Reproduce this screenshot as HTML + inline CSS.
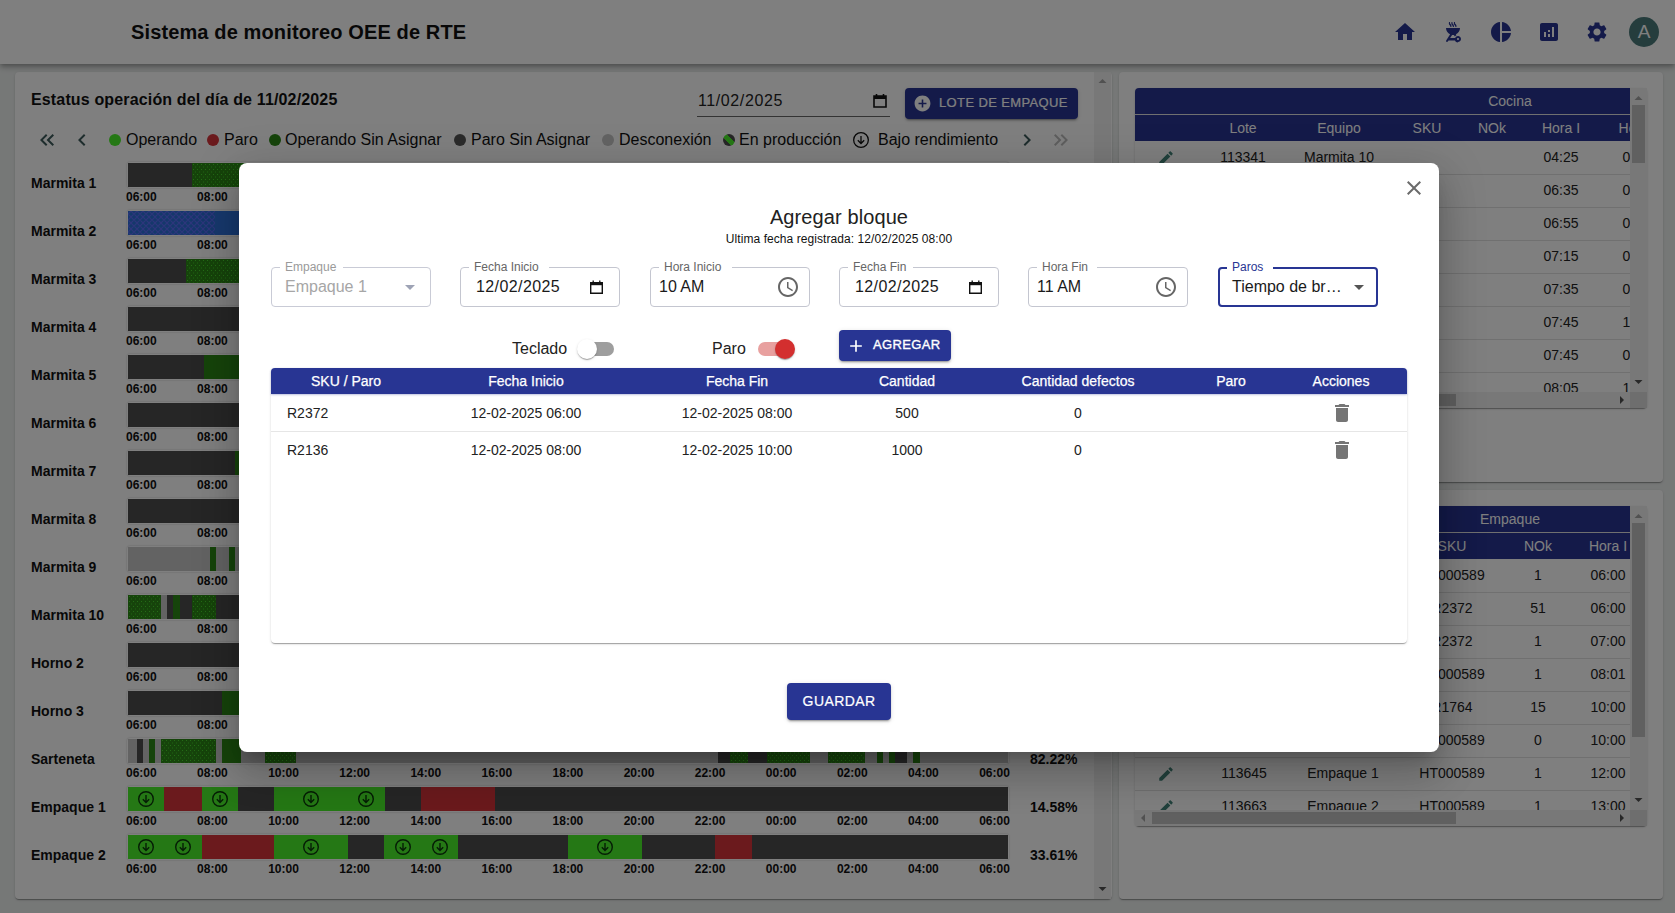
<!DOCTYPE html>
<html><head><meta charset="utf-8"><title>OEE</title>
<style>
html,body{margin:0;padding:0;width:1675px;height:913px;overflow:hidden;background:#edf0ef;font-family:"Liberation Sans", sans-serif}
.a{position:absolute}
.t{position:absolute;white-space:nowrap}
#page{position:absolute;left:0;top:0;width:1675px;height:913px}
svg{display:block}
</style></head><body>
<svg width="0" height="0" style="position:absolute"><defs><pattern id="pdots" width="4" height="5" patternUnits="userSpaceOnUse"><rect x="1" y="1" width="1" height="1" fill="#48d82c"/><rect x="3" y="3.5" width="1" height="1" fill="#48d82c" opacity=".8"/></pattern><pattern id="pblue" width="6" height="6" patternUnits="userSpaceOnUse"><path d="M0 3L3 0L6 3L3 6Z" fill="none" stroke="#5a6cf8" stroke-width="1.1"/></pattern></defs></svg>
<div id="page">
<div class="a" style="left:0px;top:0px;width:1675px;height:64px;background:#fff;box-shadow:0 2px 4px -1px rgba(0,0,0,.2),0 4px 5px 0 rgba(0,0,0,.14),0 1px 10px 0 rgba(0,0,0,.12);z-index:2"></div>
<div class="a" style="left:0;top:0;width:1675px;height:64px;z-index:3">
<div class="t" style="left:131px;top:22.07px;font-size:20px;line-height:20px;color:#111;font-weight:bold;letter-spacing:0.13px">Sistema de monitoreo OEE de RTE</div>
<svg class="a" style="left:1393px;top:20px;" width="24" height="24" viewBox="0 0 24 24"><path fill="#283593" d="M10 20v-6h4v6h5v-8h3L12 3 2 12h3v8z"/></svg>
<svg class="a" style="left:1441px;top:20px;" width="24" height="24" viewBox="0 0 24 24"><path fill="#283593" d="M17 22c1.66 0 3-1.34 3-3s-1.34-3-3-3c-1.3 0-2.4.84-2.82 2H9.14l1.99-3.06c.29.04.58.06.87.06s.58-.02.87-.06l1.02 1.57c.42-.53.96-.95 1.6-1.21l-.6-.93C17.31 13.27 19 10.84 19 8H5c0 2.84 1.69 5.27 4.12 6.37l-3.95 6.08c-.3.46-.17 1.08.29 1.38.17.11.36.17.54.17.33 0 .65-.16.84-.46l.68-1.04h6.46c.42 1.16 1.52 2 2.82 2zm0-4c.55 0 1 .45 1 1s-.45 1-1 1-1-.45-1-1 .45-1 1-1zM9.41 7h1c.15-1.15.23-1.64-.89-2.96-.42-.5-.68-.78-.53-2.04h-.99c-.44 1.85.07 2.57.66 3.2.32.35.59.68.75 1.8zm2.49 0h1c.15-1.15.23-1.64-.89-2.96-.42-.5-.68-.78-.53-2.04h-.99c-.44 1.85.07 2.57.66 3.2.32.35.59.68.75 1.8zm2.52 0h1c.15-1.15.23-1.64-.89-2.96-.42-.5-.68-.78-.53-2.04h-.99c-.44 1.85.07 2.57.66 3.2.32.35.59.68.75 1.8z"/></svg>
<svg class="a" style="left:1489px;top:20px;" width="24" height="24" viewBox="0 0 24 24"><path fill="#283593" d="M11 2v20c-5.07-.5-9-4.79-9-10s3.93-9.5 9-10zm2.03 0v8.99H22c-.47-4.74-4.24-8.52-8.97-8.99zm0 11.01V22c4.74-.47 8.5-4.25 8.97-8.99h-8.97z"/></svg>
<svg class="a" style="left:1537px;top:20px;" width="24" height="24" viewBox="0 0 24 24"><path fill="#283593" d="M19 3H5c-1.1 0-2 .9-2 2v14c0 1.1.9 2 2 2h14c1.1 0 2-.9 2-2V5c0-1.1-.9-2-2-2zM9 17H7v-5h2v5zm4 0h-2v-3h2v3zm0-5h-2v-2h2v2zm4 5h-2V7h2v10z"/></svg>
<svg class="a" style="left:1585px;top:20px;" width="24" height="24" viewBox="0 0 24 24"><path fill="#283593" d="M19.14 12.94c.04-.3.06-.61.06-.94 0-.32-.02-.64-.07-.94l2.03-1.58c.18-.14.23-.41.12-.61l-1.92-3.32c-.12-.22-.37-.29-.59-.22l-2.39.96c-.5-.38-1.03-.7-1.62-.94l-.36-2.54c-.04-.24-.24-.41-.48-.41h-3.84c-.24 0-.43.17-.47.41l-.36 2.54c-.59.24-1.13.57-1.62.94l-2.39-.96c-.22-.08-.47 0-.59.22L2.74 8.87c-.12.21-.08.47.12.61l2.03 1.58c-.05.3-.09.63-.09.94s.02.64.07.94l-2.03 1.58c-.18.14-.23.41-.12.61l1.92 3.32c.12.22.37.29.59.22l2.39-.96c.5.38 1.03.7 1.62.94l.36 2.54c.05.24.24.41.48.41h3.84c.24 0 .44-.17.47-.41l.36-2.54c.59-.24 1.13-.56 1.62-.94l2.39.96c.22.08.47 0 .59-.22l1.92-3.32c.12-.22.07-.47-.12-.61l-2.01-1.58zM12 15.6c-1.98 0-3.6-1.62-3.6-3.6s1.62-3.6 3.6-3.6 3.6 1.62 3.6 3.6-1.62 3.6-3.6 3.6z"/></svg>
<div class="a" style="left:1629px;top:17px;width:30px;height:30px;border-radius:50%;background:#4a7a7a"></div>
<div class="t" style="left:1624.00px;width:40px;text-align:center;top:21.92px;font-size:19px;line-height:19px;color:#fff;font-weight:normal;">A</div>
</div>
<div class="a" style="left:15px;top:72px;width:1097px;height:827px;background:#fff;border-radius:4px;box-shadow:0 2px 1px -1px rgba(0,0,0,.2),0 1px 1px 0 rgba(0,0,0,.14),0 1px 3px 0 rgba(0,0,0,.12)"></div>
<div class="a" style="left:1094px;top:72px;width:17px;height:827px;background:#f1f1f1"></div>
<svg class="a" style="left:1094px;top:75px" width="17" height="10"><path d="M4.5 8L8.5 4L12.5 8z" fill="#a3a3a3"/></svg>
<svg class="a" style="left:1094px;top:885px" width="17" height="10"><path d="M4.5 2L8.5 6L12.5 2z" fill="#505050"/></svg>
<div class="t" style="left:31px;top:92.46px;font-size:16px;line-height:16px;color:#111;font-weight:bold;letter-spacing:0.15px">Estatus operación del día de 11/02/2025</div>
<div class="t" style="left:698px;top:93.46px;font-size:16px;line-height:16px;color:#222;font-weight:normal;letter-spacing:0.6px">11/02/2025</div>
<div class="a" style="left:697px;top:116px;width:193px;height:1px;background:#666"></div>
<svg class="a" style="left:873px;top:93px" width="14" height="15" viewBox="0 0 14 15"><path d="M1 3h12v11H1z" fill="none" stroke="#111" stroke-width="1.6"/><path d="M1 3h12v3H1z" fill="#111"/><path d="M3.5 1v3M10.5 1v3" stroke="#111" stroke-width="1.6"/></svg>
<div class="a" style="left:905px;top:88px;width:173px;height:31px;background:#283593;border-radius:4px;box-shadow:0 3px 1px -2px rgba(0,0,0,.2),0 2px 2px 0 rgba(0,0,0,.14),0 1px 5px 0 rgba(0,0,0,.12)"></div>
<svg class="a" style="left:913px;top:94px;" width="19" height="19" viewBox="0 0 24 24"><path fill="#fff" d="M12 2C6.48 2 2 6.48 2 12s4.48 10 10 10 10-4.48 10-10S17.52 2 12 2zm5 11h-4v4h-2v-4H7v-2h4V7h2v4h4v2z"/></svg>
<div class="t" style="left:939px;top:96.00px;font-size:13px;line-height:13px;color:#fff;font-weight:normal;letter-spacing:0.37px;-webkit-text-stroke:0.2px #fff">LOTE DE EMPAQUE</div>
<svg class="a" style="left:35px;top:128px;" width="24" height="24" viewBox="0 0 24 24"><path fill="#3c5a5a" d="M17.59 18L19 16.59 14.42 12 19 7.41 17.59 6l-6 6zM11 18l1.41-1.41L7.83 12l4.58-4.59L11 6l-6 6z"/></svg>
<svg class="a" style="left:70px;top:128px;" width="24" height="24" viewBox="0 0 24 24"><path fill="#3c5a5a" d="M15.41 7.41L14 6l-6 6 6 6 1.41-1.41L10.83 12z"/></svg>
<div class="a" style="left:109px;top:134px;width:12px;height:12px;border-radius:50%;background:#4af02a"></div>
<div class="t" style="left:126px;top:132.46px;font-size:16px;line-height:16px;color:#111;font-weight:normal;">Operando</div>
<div class="a" style="left:207px;top:134px;width:12px;height:12px;border-radius:50%;background:#d6343a"></div>
<div class="t" style="left:224px;top:132.46px;font-size:16px;line-height:16px;color:#111;font-weight:normal;">Paro</div>
<div class="a" style="left:269px;top:134px;width:12px;height:12px;border-radius:50%;background:#2c8816"></div>
<div class="t" style="left:285px;top:132.46px;font-size:16px;line-height:16px;color:#111;font-weight:normal;">Operando Sin Asignar</div>
<div class="a" style="left:454px;top:134px;width:12px;height:12px;border-radius:50%;background:#555"></div>
<div class="t" style="left:471px;top:132.46px;font-size:16px;line-height:16px;color:#111;font-weight:normal;">Paro Sin Asignar</div>
<div class="a" style="left:602px;top:134px;width:12px;height:12px;border-radius:50%;background:#c6c6c6"></div>
<div class="t" style="left:619px;top:132.46px;font-size:16px;line-height:16px;color:#111;font-weight:normal;">Desconexión</div>
<div class="a" style="left:723px;top:134px;width:12px;height:12px;border-radius:50%;background:linear-gradient(45deg,#4c4c4c 0 35%,#4af02a 35% 65%,#4c4c4c 65%)"></div>
<div class="t" style="left:739px;top:132.46px;font-size:16px;line-height:16px;color:#111;font-weight:normal;">En producción</div>
<svg class="a" style="left:853.0px;top:132.0px" width="16" height="16" viewBox="0 0 16 16"><circle cx="8.0" cy="8.0" r="7.35" fill="none" stroke="#111" stroke-width="1.3"/><path d="M8.0 4.0V11.52M4.8 8.32L8.0 11.52L11.2 8.32" fill="none" stroke="#111" stroke-width="1.3"/></svg>
<div class="t" style="left:878px;top:132.46px;font-size:16px;line-height:16px;color:#111;font-weight:normal;">Bajo rendimiento</div>
<svg class="a" style="left:1015px;top:128px;" width="24" height="24" viewBox="0 0 24 24"><path fill="#3c5a5a" d="M10 6L8.59 7.41 13.17 12l-4.58 4.59L10 18l6-6z"/></svg>
<svg class="a" style="left:1049px;top:128px;" width="24" height="24" viewBox="0 0 24 24"><path fill="#bdbdbd" d="M6.41 6L5 7.41 9.58 12 5 16.59 6.41 18l6-6zM13 6l-1.41 1.41L16.17 12l-4.58 4.59L13 18l6-6z"/></svg>
<div class="t" style="left:31px;top:175.75px;font-size:14px;line-height:14px;color:#111;font-weight:bold;">Marmita 1</div>
<div class="a" style="left:127px;top:162px;width:882px;height:26px;border-radius:3px;box-shadow:0 0 2px rgba(0,0,0,.25)"></div>
<div class="a" style="left:128px;top:163px;width:64px;height:24px;background:#4c4c4c"></div>
<svg class="a" style="left:192px;top:163px" width="816" height="24"><rect width="816" height="24" fill="#2c8816"/><rect width="816" height="24" fill="url(#pdots)"/></svg>
<div class="a" style="left:126px;top:190px;width:884px;display:flex;justify-content:space-between;font-size:12px;line-height:14px;font-weight:bold;color:#111"><span>06:00</span><span>08:00</span><span>10:00</span><span>12:00</span><span>14:00</span><span>16:00</span><span>18:00</span><span>20:00</span><span>22:00</span><span>00:00</span><span>02:00</span><span>04:00</span><span>06:00</span></div>
<div class="t" style="left:31px;top:223.75px;font-size:14px;line-height:14px;color:#111;font-weight:bold;">Marmita 2</div>
<div class="a" style="left:127px;top:210px;width:882px;height:26px;border-radius:3px;box-shadow:0 0 2px rgba(0,0,0,.25)"></div>
<svg class="a" style="left:128px;top:211px" width="87" height="24"><rect width="87" height="24" fill="#2a70d6"/><rect width="87" height="24" fill="url(#pblue)"/></svg>
<div class="a" style="left:215px;top:211px;width:793px;height:24px;background:#2e72dc"></div>
<div class="a" style="left:126px;top:238px;width:884px;display:flex;justify-content:space-between;font-size:12px;line-height:14px;font-weight:bold;color:#111"><span>06:00</span><span>08:00</span><span>10:00</span><span>12:00</span><span>14:00</span><span>16:00</span><span>18:00</span><span>20:00</span><span>22:00</span><span>00:00</span><span>02:00</span><span>04:00</span><span>06:00</span></div>
<div class="t" style="left:31px;top:271.75px;font-size:14px;line-height:14px;color:#111;font-weight:bold;">Marmita 3</div>
<div class="a" style="left:127px;top:258px;width:882px;height:26px;border-radius:3px;box-shadow:0 0 2px rgba(0,0,0,.25)"></div>
<div class="a" style="left:128px;top:259px;width:58px;height:24px;background:#4c4c4c"></div>
<svg class="a" style="left:186px;top:259px" width="822" height="24"><rect width="822" height="24" fill="#2c8816"/><rect width="822" height="24" fill="url(#pdots)"/></svg>
<div class="a" style="left:126px;top:286px;width:884px;display:flex;justify-content:space-between;font-size:12px;line-height:14px;font-weight:bold;color:#111"><span>06:00</span><span>08:00</span><span>10:00</span><span>12:00</span><span>14:00</span><span>16:00</span><span>18:00</span><span>20:00</span><span>22:00</span><span>00:00</span><span>02:00</span><span>04:00</span><span>06:00</span></div>
<div class="t" style="left:31px;top:319.75px;font-size:14px;line-height:14px;color:#111;font-weight:bold;">Marmita 4</div>
<div class="a" style="left:127px;top:306px;width:882px;height:26px;border-radius:3px;box-shadow:0 0 2px rgba(0,0,0,.25)"></div>
<div class="a" style="left:128px;top:307px;width:880px;height:24px;background:#4c4c4c"></div>
<div class="a" style="left:126px;top:334px;width:884px;display:flex;justify-content:space-between;font-size:12px;line-height:14px;font-weight:bold;color:#111"><span>06:00</span><span>08:00</span><span>10:00</span><span>12:00</span><span>14:00</span><span>16:00</span><span>18:00</span><span>20:00</span><span>22:00</span><span>00:00</span><span>02:00</span><span>04:00</span><span>06:00</span></div>
<div class="t" style="left:31px;top:367.75px;font-size:14px;line-height:14px;color:#111;font-weight:bold;">Marmita 5</div>
<div class="a" style="left:127px;top:354px;width:882px;height:26px;border-radius:3px;box-shadow:0 0 2px rgba(0,0,0,.25)"></div>
<div class="a" style="left:128px;top:355px;width:76px;height:24px;background:#4c4c4c"></div>
<div class="a" style="left:204px;top:355px;width:804px;height:24px;background:#2c8816"></div>
<div class="a" style="left:126px;top:382px;width:884px;display:flex;justify-content:space-between;font-size:12px;line-height:14px;font-weight:bold;color:#111"><span>06:00</span><span>08:00</span><span>10:00</span><span>12:00</span><span>14:00</span><span>16:00</span><span>18:00</span><span>20:00</span><span>22:00</span><span>00:00</span><span>02:00</span><span>04:00</span><span>06:00</span></div>
<div class="t" style="left:31px;top:415.75px;font-size:14px;line-height:14px;color:#111;font-weight:bold;">Marmita 6</div>
<div class="a" style="left:127px;top:402px;width:882px;height:26px;border-radius:3px;box-shadow:0 0 2px rgba(0,0,0,.25)"></div>
<div class="a" style="left:128px;top:403px;width:880px;height:24px;background:#4c4c4c"></div>
<div class="a" style="left:126px;top:430px;width:884px;display:flex;justify-content:space-between;font-size:12px;line-height:14px;font-weight:bold;color:#111"><span>06:00</span><span>08:00</span><span>10:00</span><span>12:00</span><span>14:00</span><span>16:00</span><span>18:00</span><span>20:00</span><span>22:00</span><span>00:00</span><span>02:00</span><span>04:00</span><span>06:00</span></div>
<div class="t" style="left:31px;top:463.75px;font-size:14px;line-height:14px;color:#111;font-weight:bold;">Marmita 7</div>
<div class="a" style="left:127px;top:450px;width:882px;height:26px;border-radius:3px;box-shadow:0 0 2px rgba(0,0,0,.25)"></div>
<div class="a" style="left:128px;top:451px;width:107px;height:24px;background:#4c4c4c"></div>
<div class="a" style="left:235px;top:451px;width:773px;height:24px;background:#2c8816"></div>
<div class="a" style="left:126px;top:478px;width:884px;display:flex;justify-content:space-between;font-size:12px;line-height:14px;font-weight:bold;color:#111"><span>06:00</span><span>08:00</span><span>10:00</span><span>12:00</span><span>14:00</span><span>16:00</span><span>18:00</span><span>20:00</span><span>22:00</span><span>00:00</span><span>02:00</span><span>04:00</span><span>06:00</span></div>
<div class="t" style="left:31px;top:511.75px;font-size:14px;line-height:14px;color:#111;font-weight:bold;">Marmita 8</div>
<div class="a" style="left:127px;top:498px;width:882px;height:26px;border-radius:3px;box-shadow:0 0 2px rgba(0,0,0,.25)"></div>
<div class="a" style="left:128px;top:499px;width:880px;height:24px;background:#4c4c4c"></div>
<div class="a" style="left:126px;top:526px;width:884px;display:flex;justify-content:space-between;font-size:12px;line-height:14px;font-weight:bold;color:#111"><span>06:00</span><span>08:00</span><span>10:00</span><span>12:00</span><span>14:00</span><span>16:00</span><span>18:00</span><span>20:00</span><span>22:00</span><span>00:00</span><span>02:00</span><span>04:00</span><span>06:00</span></div>
<div class="t" style="left:31px;top:559.75px;font-size:14px;line-height:14px;color:#111;font-weight:bold;">Marmita 9</div>
<div class="a" style="left:127px;top:546px;width:882px;height:26px;border-radius:3px;box-shadow:0 0 2px rgba(0,0,0,.25)"></div>
<div class="a" style="left:128px;top:547px;width:82px;height:24px;background:#c6c6c6"></div>
<div class="a" style="left:210px;top:547px;width:6px;height:24px;background:#2c8816"></div>
<div class="a" style="left:216px;top:547px;width:13px;height:24px;background:#c6c6c6"></div>
<div class="a" style="left:229px;top:547px;width:6px;height:24px;background:#2c8816"></div>
<div class="a" style="left:235px;top:547px;width:773px;height:24px;background:#c6c6c6"></div>
<div class="a" style="left:126px;top:574px;width:884px;display:flex;justify-content:space-between;font-size:12px;line-height:14px;font-weight:bold;color:#111"><span>06:00</span><span>08:00</span><span>10:00</span><span>12:00</span><span>14:00</span><span>16:00</span><span>18:00</span><span>20:00</span><span>22:00</span><span>00:00</span><span>02:00</span><span>04:00</span><span>06:00</span></div>
<div class="t" style="left:31px;top:607.75px;font-size:14px;line-height:14px;color:#111;font-weight:bold;">Marmita 10</div>
<div class="a" style="left:127px;top:594px;width:882px;height:26px;border-radius:3px;box-shadow:0 0 2px rgba(0,0,0,.25)"></div>
<svg class="a" style="left:128px;top:595px" width="33" height="24"><rect width="33" height="24" fill="#2c8816"/><rect width="33" height="24" fill="url(#pdots)"/></svg>
<div class="a" style="left:161px;top:595px;width:6px;height:24px;background:#c6c6c6"></div>
<div class="a" style="left:167px;top:595px;width:6px;height:24px;background:#4c4c4c"></div>
<div class="a" style="left:173px;top:595px;width:7px;height:24px;background:#2c8816"></div>
<div class="a" style="left:180px;top:595px;width:12px;height:24px;background:#4c4c4c"></div>
<svg class="a" style="left:192px;top:595px" width="24" height="24"><rect width="24" height="24" fill="#2c8816"/><rect width="24" height="24" fill="url(#pdots)"/></svg>
<div class="a" style="left:216px;top:595px;width:792px;height:24px;background:#4c4c4c"></div>
<div class="a" style="left:126px;top:622px;width:884px;display:flex;justify-content:space-between;font-size:12px;line-height:14px;font-weight:bold;color:#111"><span>06:00</span><span>08:00</span><span>10:00</span><span>12:00</span><span>14:00</span><span>16:00</span><span>18:00</span><span>20:00</span><span>22:00</span><span>00:00</span><span>02:00</span><span>04:00</span><span>06:00</span></div>
<div class="t" style="left:31px;top:655.75px;font-size:14px;line-height:14px;color:#111;font-weight:bold;">Horno 2</div>
<div class="a" style="left:127px;top:642px;width:882px;height:26px;border-radius:3px;box-shadow:0 0 2px rgba(0,0,0,.25)"></div>
<div class="a" style="left:128px;top:643px;width:880px;height:24px;background:#4c4c4c"></div>
<div class="a" style="left:126px;top:670px;width:884px;display:flex;justify-content:space-between;font-size:12px;line-height:14px;font-weight:bold;color:#111"><span>06:00</span><span>08:00</span><span>10:00</span><span>12:00</span><span>14:00</span><span>16:00</span><span>18:00</span><span>20:00</span><span>22:00</span><span>00:00</span><span>02:00</span><span>04:00</span><span>06:00</span></div>
<div class="t" style="left:31px;top:703.75px;font-size:14px;line-height:14px;color:#111;font-weight:bold;">Horno 3</div>
<div class="a" style="left:127px;top:690px;width:882px;height:26px;border-radius:3px;box-shadow:0 0 2px rgba(0,0,0,.25)"></div>
<div class="a" style="left:128px;top:691px;width:94px;height:24px;background:#4c4c4c"></div>
<div class="a" style="left:222px;top:691px;width:786px;height:24px;background:#2c8816"></div>
<div class="a" style="left:126px;top:718px;width:884px;display:flex;justify-content:space-between;font-size:12px;line-height:14px;font-weight:bold;color:#111"><span>06:00</span><span>08:00</span><span>10:00</span><span>12:00</span><span>14:00</span><span>16:00</span><span>18:00</span><span>20:00</span><span>22:00</span><span>00:00</span><span>02:00</span><span>04:00</span><span>06:00</span></div>
<div class="t" style="left:31px;top:751.75px;font-size:14px;line-height:14px;color:#111;font-weight:bold;">Sarteneta</div>
<div class="a" style="left:127px;top:738px;width:882px;height:26px;border-radius:3px;box-shadow:0 0 2px rgba(0,0,0,.25)"></div>
<div class="a" style="left:128px;top:739px;width:9px;height:24px;background:#c6c6c6"></div>
<div class="a" style="left:137px;top:739px;width:6px;height:24px;background:#4c4c4c"></div>
<div class="a" style="left:143px;top:739px;width:6px;height:24px;background:#c6c6c6"></div>
<div class="a" style="left:149px;top:739px;width:6px;height:24px;background:#2c8816"></div>
<div class="a" style="left:155px;top:739px;width:6px;height:24px;background:#c6c6c6"></div>
<svg class="a" style="left:161px;top:739px" width="55" height="24"><rect width="55" height="24" fill="#2c8816"/><rect width="55" height="24" fill="url(#pdots)"/></svg>
<div class="a" style="left:216px;top:739px;width:6px;height:24px;background:#c6c6c6"></div>
<div class="a" style="left:222px;top:739px;width:19px;height:24px;background:#2c8816"></div>
<div class="a" style="left:241px;top:739px;width:24px;height:24px;background:#c6c6c6"></div>
<svg class="a" style="left:265px;top:739px" width="31" height="24"><rect width="31" height="24" fill="#2c8816"/><rect width="31" height="24" fill="url(#pdots)"/></svg>
<div class="a" style="left:296px;top:739px;width:422px;height:24px;background:#c6c6c6"></div>
<div class="a" style="left:718px;top:739px;width:12px;height:24px;background:#4c4c4c"></div>
<svg class="a" style="left:730px;top:739px" width="18" height="24"><rect width="18" height="24" fill="#2c8816"/><rect width="18" height="24" fill="url(#pdots)"/></svg>
<div class="a" style="left:748px;top:739px;width:19px;height:24px;background:#4c4c4c"></div>
<svg class="a" style="left:767px;top:739px" width="43" height="24"><rect width="43" height="24" fill="#2c8816"/><rect width="43" height="24" fill="url(#pdots)"/></svg>
<div class="a" style="left:810px;top:739px;width:18px;height:24px;background:#c6c6c6"></div>
<svg class="a" style="left:828px;top:739px" width="37" height="24"><rect width="37" height="24" fill="#2c8816"/><rect width="37" height="24" fill="url(#pdots)"/></svg>
<div class="a" style="left:865px;top:739px;width:12px;height:24px;background:#c6c6c6"></div>
<div class="a" style="left:877px;top:739px;width:6px;height:24px;background:#2c8816"></div>
<div class="a" style="left:883px;top:739px;width:6px;height:24px;background:#c6c6c6"></div>
<div class="a" style="left:889px;top:739px;width:6px;height:24px;background:#2c8816"></div>
<div class="a" style="left:895px;top:739px;width:12px;height:24px;background:#4c4c4c"></div>
<div class="a" style="left:907px;top:739px;width:6px;height:24px;background:#c6c6c6"></div>
<div class="a" style="left:913px;top:739px;width:7px;height:24px;background:#2c8816"></div>
<div class="a" style="left:920px;top:739px;width:88px;height:24px;background:#c6c6c6"></div>
<div class="a" style="left:126px;top:766px;width:884px;display:flex;justify-content:space-between;font-size:12px;line-height:14px;font-weight:bold;color:#111"><span>06:00</span><span>08:00</span><span>10:00</span><span>12:00</span><span>14:00</span><span>16:00</span><span>18:00</span><span>20:00</span><span>22:00</span><span>00:00</span><span>02:00</span><span>04:00</span><span>06:00</span></div>
<div class="t" style="left:31px;top:799.75px;font-size:14px;line-height:14px;color:#111;font-weight:bold;">Empaque 1</div>
<div class="a" style="left:127px;top:786px;width:882px;height:26px;border-radius:3px;box-shadow:0 0 2px rgba(0,0,0,.25)"></div>
<div class="a" style="left:128px;top:787px;width:36px;height:24px;background:#4af02a"></div>
<div class="a" style="left:164px;top:787px;width:38px;height:24px;background:#d6343a"></div>
<div class="a" style="left:202px;top:787px;width:36px;height:24px;background:#4af02a"></div>
<div class="a" style="left:238px;top:787px;width:36px;height:24px;background:#4c4c4c"></div>
<div class="a" style="left:274px;top:787px;width:111px;height:24px;background:#4af02a"></div>
<div class="a" style="left:385px;top:787px;width:36px;height:24px;background:#4c4c4c"></div>
<div class="a" style="left:421px;top:787px;width:74px;height:24px;background:#d6343a"></div>
<div class="a" style="left:495px;top:787px;width:513px;height:24px;background:#4c4c4c"></div>
<svg class="a" style="left:138.0px;top:791.0px" width="16" height="16" viewBox="0 0 16 16"><circle cx="8.0" cy="8.0" r="7.3" fill="none" stroke="#0b3a0b" stroke-width="1.4"/><path d="M8.0 4.0V11.52M4.8 8.32L8.0 11.52L11.2 8.32" fill="none" stroke="#0b3a0b" stroke-width="1.4"/></svg>
<svg class="a" style="left:212.0px;top:791.0px" width="16" height="16" viewBox="0 0 16 16"><circle cx="8.0" cy="8.0" r="7.3" fill="none" stroke="#0b3a0b" stroke-width="1.4"/><path d="M8.0 4.0V11.52M4.8 8.32L8.0 11.52L11.2 8.32" fill="none" stroke="#0b3a0b" stroke-width="1.4"/></svg>
<svg class="a" style="left:303.0px;top:791.0px" width="16" height="16" viewBox="0 0 16 16"><circle cx="8.0" cy="8.0" r="7.3" fill="none" stroke="#0b3a0b" stroke-width="1.4"/><path d="M8.0 4.0V11.52M4.8 8.32L8.0 11.52L11.2 8.32" fill="none" stroke="#0b3a0b" stroke-width="1.4"/></svg>
<svg class="a" style="left:358.0px;top:791.0px" width="16" height="16" viewBox="0 0 16 16"><circle cx="8.0" cy="8.0" r="7.3" fill="none" stroke="#0b3a0b" stroke-width="1.4"/><path d="M8.0 4.0V11.52M4.8 8.32L8.0 11.52L11.2 8.32" fill="none" stroke="#0b3a0b" stroke-width="1.4"/></svg>
<div class="a" style="left:126px;top:814px;width:884px;display:flex;justify-content:space-between;font-size:12px;line-height:14px;font-weight:bold;color:#111"><span>06:00</span><span>08:00</span><span>10:00</span><span>12:00</span><span>14:00</span><span>16:00</span><span>18:00</span><span>20:00</span><span>22:00</span><span>00:00</span><span>02:00</span><span>04:00</span><span>06:00</span></div>
<div class="t" style="left:31px;top:847.75px;font-size:14px;line-height:14px;color:#111;font-weight:bold;">Empaque 2</div>
<div class="a" style="left:127px;top:834px;width:882px;height:26px;border-radius:3px;box-shadow:0 0 2px rgba(0,0,0,.25)"></div>
<div class="a" style="left:128px;top:835px;width:74px;height:24px;background:#4af02a"></div>
<div class="a" style="left:202px;top:835px;width:72px;height:24px;background:#d6343a"></div>
<div class="a" style="left:274px;top:835px;width:74px;height:24px;background:#4af02a"></div>
<div class="a" style="left:348px;top:835px;width:36px;height:24px;background:#4c4c4c"></div>
<div class="a" style="left:384px;top:835px;width:74px;height:24px;background:#4af02a"></div>
<div class="a" style="left:458px;top:835px;width:110px;height:24px;background:#4c4c4c"></div>
<div class="a" style="left:568px;top:835px;width:74px;height:24px;background:#4af02a"></div>
<div class="a" style="left:642px;top:835px;width:73px;height:24px;background:#4c4c4c"></div>
<div class="a" style="left:715px;top:835px;width:37px;height:24px;background:#d6343a"></div>
<div class="a" style="left:752px;top:835px;width:256px;height:24px;background:#4c4c4c"></div>
<svg class="a" style="left:138.0px;top:839.0px" width="16" height="16" viewBox="0 0 16 16"><circle cx="8.0" cy="8.0" r="7.3" fill="none" stroke="#0b3a0b" stroke-width="1.4"/><path d="M8.0 4.0V11.52M4.8 8.32L8.0 11.52L11.2 8.32" fill="none" stroke="#0b3a0b" stroke-width="1.4"/></svg>
<svg class="a" style="left:175.0px;top:839.0px" width="16" height="16" viewBox="0 0 16 16"><circle cx="8.0" cy="8.0" r="7.3" fill="none" stroke="#0b3a0b" stroke-width="1.4"/><path d="M8.0 4.0V11.52M4.8 8.32L8.0 11.52L11.2 8.32" fill="none" stroke="#0b3a0b" stroke-width="1.4"/></svg>
<svg class="a" style="left:303.0px;top:839.0px" width="16" height="16" viewBox="0 0 16 16"><circle cx="8.0" cy="8.0" r="7.3" fill="none" stroke="#0b3a0b" stroke-width="1.4"/><path d="M8.0 4.0V11.52M4.8 8.32L8.0 11.52L11.2 8.32" fill="none" stroke="#0b3a0b" stroke-width="1.4"/></svg>
<svg class="a" style="left:395.0px;top:839.0px" width="16" height="16" viewBox="0 0 16 16"><circle cx="8.0" cy="8.0" r="7.3" fill="none" stroke="#0b3a0b" stroke-width="1.4"/><path d="M8.0 4.0V11.52M4.8 8.32L8.0 11.52L11.2 8.32" fill="none" stroke="#0b3a0b" stroke-width="1.4"/></svg>
<svg class="a" style="left:432.0px;top:839.0px" width="16" height="16" viewBox="0 0 16 16"><circle cx="8.0" cy="8.0" r="7.3" fill="none" stroke="#0b3a0b" stroke-width="1.4"/><path d="M8.0 4.0V11.52M4.8 8.32L8.0 11.52L11.2 8.32" fill="none" stroke="#0b3a0b" stroke-width="1.4"/></svg>
<svg class="a" style="left:597.0px;top:839.0px" width="16" height="16" viewBox="0 0 16 16"><circle cx="8.0" cy="8.0" r="7.3" fill="none" stroke="#0b3a0b" stroke-width="1.4"/><path d="M8.0 4.0V11.52M4.8 8.32L8.0 11.52L11.2 8.32" fill="none" stroke="#0b3a0b" stroke-width="1.4"/></svg>
<div class="a" style="left:126px;top:862px;width:884px;display:flex;justify-content:space-between;font-size:12px;line-height:14px;font-weight:bold;color:#111"><span>06:00</span><span>08:00</span><span>10:00</span><span>12:00</span><span>14:00</span><span>16:00</span><span>18:00</span><span>20:00</span><span>22:00</span><span>00:00</span><span>02:00</span><span>04:00</span><span>06:00</span></div>
<div class="t" style="left:1030px;top:752.15px;font-size:14px;line-height:14px;color:#111;font-weight:bold;">82.22%</div>
<div class="t" style="left:1030px;top:800.15px;font-size:14px;line-height:14px;color:#111;font-weight:bold;">14.58%</div>
<div class="t" style="left:1030px;top:848.15px;font-size:14px;line-height:14px;color:#111;font-weight:bold;">33.61%</div>
<div class="a" style="left:1119px;top:72px;width:544px;height:410px;background:#fff;border-radius:4px;box-shadow:0 2px 1px -1px rgba(0,0,0,.2),0 1px 1px 0 rgba(0,0,0,.14),0 1px 3px 0 rgba(0,0,0,.12)"></div>
<div class="a" style="left:1135px;top:88px;width:512px;height:320px;border-radius:4px;box-shadow:0 2px 1px -1px rgba(0,0,0,.2),0 1px 1px 0 rgba(0,0,0,.14),0 1px 3px 0 rgba(0,0,0,.12)"></div>
<div class="a" style="left:1135px;top:88px;width:495px;height:304px;overflow:hidden;background:#fff;border-top-left-radius:4px">
<div class="a" style="left:0px;top:0px;width:760px;height:26px;background:#283593"></div>
<div class="a" style="left:0px;top:26px;width:760px;height:1px;background:#e0e0e0"></div>
<div class="a" style="left:0px;top:27px;width:760px;height:26px;background:#283593"></div>
<div class="t" style="left:275.00px;width:200px;text-align:center;top:6.15px;font-size:14px;line-height:14px;color:#fff;font-weight:normal;">Cocina</div>
<div class="t" style="left:8.00px;width:200px;text-align:center;top:33.15px;font-size:14px;line-height:14px;color:#fff;font-weight:normal;">Lote</div>
<div class="t" style="left:104.00px;width:200px;text-align:center;top:33.15px;font-size:14px;line-height:14px;color:#fff;font-weight:normal;">Equipo</div>
<div class="t" style="left:192.00px;width:200px;text-align:center;top:33.15px;font-size:14px;line-height:14px;color:#fff;font-weight:normal;">SKU</div>
<div class="t" style="left:257.00px;width:200px;text-align:center;top:33.15px;font-size:14px;line-height:14px;color:#fff;font-weight:normal;">NOk</div>
<div class="t" style="left:326.00px;width:200px;text-align:center;top:33.15px;font-size:14px;line-height:14px;color:#fff;font-weight:normal;">Hora I</div>
<div class="t" style="left:405.00px;width:200px;text-align:center;top:33.15px;font-size:14px;line-height:14px;color:#fff;font-weight:normal;">Hora F</div>
<div class="a" style="left:0px;top:86px;width:760px;height:1px;background:#e0e0e0"></div>
<svg class="a" style="left:22px;top:61px;" width="18" height="18" viewBox="0 0 24 24"><path fill="#44847a" d="M3 17.25V21h3.75L17.81 9.94l-3.75-3.75L3 17.25zM20.71 7.04c.39-.39.39-1.02 0-1.41l-2.34-2.34c-.39-.39-1.02-.39-1.41 0l-1.83 1.83 3.75 3.75 1.83-1.83z"/></svg>
<div class="t" style="left:8.00px;width:200px;text-align:center;top:62.15px;font-size:14px;line-height:14px;color:#222;font-weight:normal;">113341</div>
<div class="t" style="left:104.00px;width:200px;text-align:center;top:62.15px;font-size:14px;line-height:14px;color:#222;font-weight:normal;">Marmita 10</div>
<div class="t" style="left:326.00px;width:200px;text-align:center;top:62.15px;font-size:14px;line-height:14px;color:#222;font-weight:normal;">04:25</div>
<div class="t" style="left:405.00px;width:200px;text-align:center;top:62.15px;font-size:14px;line-height:14px;color:#222;font-weight:normal;">05:25</div>
<div class="a" style="left:0px;top:119px;width:760px;height:1px;background:#e0e0e0"></div>
<svg class="a" style="left:22px;top:94px;" width="18" height="18" viewBox="0 0 24 24"><path fill="#44847a" d="M3 17.25V21h3.75L17.81 9.94l-3.75-3.75L3 17.25zM20.71 7.04c.39-.39.39-1.02 0-1.41l-2.34-2.34c-.39-.39-1.02-.39-1.41 0l-1.83 1.83 3.75 3.75 1.83-1.83z"/></svg>
<div class="t" style="left:8.00px;width:200px;text-align:center;top:95.15px;font-size:14px;line-height:14px;color:#222;font-weight:normal;">113342</div>
<div class="t" style="left:104.00px;width:200px;text-align:center;top:95.15px;font-size:14px;line-height:14px;color:#222;font-weight:normal;">Marmita 1</div>
<div class="t" style="left:326.00px;width:200px;text-align:center;top:95.15px;font-size:14px;line-height:14px;color:#222;font-weight:normal;">06:35</div>
<div class="t" style="left:405.00px;width:200px;text-align:center;top:95.15px;font-size:14px;line-height:14px;color:#222;font-weight:normal;">07:35</div>
<div class="a" style="left:0px;top:152px;width:760px;height:1px;background:#e0e0e0"></div>
<svg class="a" style="left:22px;top:127px;" width="18" height="18" viewBox="0 0 24 24"><path fill="#44847a" d="M3 17.25V21h3.75L17.81 9.94l-3.75-3.75L3 17.25zM20.71 7.04c.39-.39.39-1.02 0-1.41l-2.34-2.34c-.39-.39-1.02-.39-1.41 0l-1.83 1.83 3.75 3.75 1.83-1.83z"/></svg>
<div class="t" style="left:8.00px;width:200px;text-align:center;top:128.15px;font-size:14px;line-height:14px;color:#222;font-weight:normal;">113343</div>
<div class="t" style="left:104.00px;width:200px;text-align:center;top:128.15px;font-size:14px;line-height:14px;color:#222;font-weight:normal;">Marmita 3</div>
<div class="t" style="left:326.00px;width:200px;text-align:center;top:128.15px;font-size:14px;line-height:14px;color:#222;font-weight:normal;">06:55</div>
<div class="t" style="left:405.00px;width:200px;text-align:center;top:128.15px;font-size:14px;line-height:14px;color:#222;font-weight:normal;">07:55</div>
<div class="a" style="left:0px;top:185px;width:760px;height:1px;background:#e0e0e0"></div>
<svg class="a" style="left:22px;top:160px;" width="18" height="18" viewBox="0 0 24 24"><path fill="#44847a" d="M3 17.25V21h3.75L17.81 9.94l-3.75-3.75L3 17.25zM20.71 7.04c.39-.39.39-1.02 0-1.41l-2.34-2.34c-.39-.39-1.02-.39-1.41 0l-1.83 1.83 3.75 3.75 1.83-1.83z"/></svg>
<div class="t" style="left:8.00px;width:200px;text-align:center;top:161.15px;font-size:14px;line-height:14px;color:#222;font-weight:normal;">113344</div>
<div class="t" style="left:104.00px;width:200px;text-align:center;top:161.15px;font-size:14px;line-height:14px;color:#222;font-weight:normal;">Marmita 5</div>
<div class="t" style="left:326.00px;width:200px;text-align:center;top:161.15px;font-size:14px;line-height:14px;color:#222;font-weight:normal;">07:15</div>
<div class="t" style="left:405.00px;width:200px;text-align:center;top:161.15px;font-size:14px;line-height:14px;color:#222;font-weight:normal;">08:15</div>
<div class="a" style="left:0px;top:218px;width:760px;height:1px;background:#e0e0e0"></div>
<svg class="a" style="left:22px;top:193px;" width="18" height="18" viewBox="0 0 24 24"><path fill="#44847a" d="M3 17.25V21h3.75L17.81 9.94l-3.75-3.75L3 17.25zM20.71 7.04c.39-.39.39-1.02 0-1.41l-2.34-2.34c-.39-.39-1.02-.39-1.41 0l-1.83 1.83 3.75 3.75 1.83-1.83z"/></svg>
<div class="t" style="left:8.00px;width:200px;text-align:center;top:194.15px;font-size:14px;line-height:14px;color:#222;font-weight:normal;">113345</div>
<div class="t" style="left:104.00px;width:200px;text-align:center;top:194.15px;font-size:14px;line-height:14px;color:#222;font-weight:normal;">Marmita 7</div>
<div class="t" style="left:326.00px;width:200px;text-align:center;top:194.15px;font-size:14px;line-height:14px;color:#222;font-weight:normal;">07:35</div>
<div class="t" style="left:405.00px;width:200px;text-align:center;top:194.15px;font-size:14px;line-height:14px;color:#222;font-weight:normal;">08:35</div>
<div class="a" style="left:0px;top:251px;width:760px;height:1px;background:#e0e0e0"></div>
<svg class="a" style="left:22px;top:226px;" width="18" height="18" viewBox="0 0 24 24"><path fill="#44847a" d="M3 17.25V21h3.75L17.81 9.94l-3.75-3.75L3 17.25zM20.71 7.04c.39-.39.39-1.02 0-1.41l-2.34-2.34c-.39-.39-1.02-.39-1.41 0l-1.83 1.83 3.75 3.75 1.83-1.83z"/></svg>
<div class="t" style="left:8.00px;width:200px;text-align:center;top:227.15px;font-size:14px;line-height:14px;color:#222;font-weight:normal;">113346</div>
<div class="t" style="left:104.00px;width:200px;text-align:center;top:227.15px;font-size:14px;line-height:14px;color:#222;font-weight:normal;">Horno 3</div>
<div class="t" style="left:326.00px;width:200px;text-align:center;top:227.15px;font-size:14px;line-height:14px;color:#222;font-weight:normal;">07:45</div>
<div class="t" style="left:405.00px;width:200px;text-align:center;top:227.15px;font-size:14px;line-height:14px;color:#222;font-weight:normal;">10:45</div>
<div class="a" style="left:0px;top:284px;width:760px;height:1px;background:#e0e0e0"></div>
<svg class="a" style="left:22px;top:259px;" width="18" height="18" viewBox="0 0 24 24"><path fill="#44847a" d="M3 17.25V21h3.75L17.81 9.94l-3.75-3.75L3 17.25zM20.71 7.04c.39-.39.39-1.02 0-1.41l-2.34-2.34c-.39-.39-1.02-.39-1.41 0l-1.83 1.83 3.75 3.75 1.83-1.83z"/></svg>
<div class="t" style="left:8.00px;width:200px;text-align:center;top:260.15px;font-size:14px;line-height:14px;color:#222;font-weight:normal;">113347</div>
<div class="t" style="left:104.00px;width:200px;text-align:center;top:260.15px;font-size:14px;line-height:14px;color:#222;font-weight:normal;">Marmita 2</div>
<div class="t" style="left:326.00px;width:200px;text-align:center;top:260.15px;font-size:14px;line-height:14px;color:#222;font-weight:normal;">07:45</div>
<div class="t" style="left:405.00px;width:200px;text-align:center;top:260.15px;font-size:14px;line-height:14px;color:#222;font-weight:normal;">08:45</div>
<div class="a" style="left:0px;top:317px;width:760px;height:1px;background:#e0e0e0"></div>
<svg class="a" style="left:22px;top:292px;" width="18" height="18" viewBox="0 0 24 24"><path fill="#44847a" d="M3 17.25V21h3.75L17.81 9.94l-3.75-3.75L3 17.25zM20.71 7.04c.39-.39.39-1.02 0-1.41l-2.34-2.34c-.39-.39-1.02-.39-1.41 0l-1.83 1.83 3.75 3.75 1.83-1.83z"/></svg>
<div class="t" style="left:8.00px;width:200px;text-align:center;top:293.15px;font-size:14px;line-height:14px;color:#222;font-weight:normal;">113348</div>
<div class="t" style="left:104.00px;width:200px;text-align:center;top:293.15px;font-size:14px;line-height:14px;color:#222;font-weight:normal;">Sarteneta</div>
<div class="t" style="left:326.00px;width:200px;text-align:center;top:293.15px;font-size:14px;line-height:14px;color:#222;font-weight:normal;">08:05</div>
<div class="t" style="left:405.00px;width:200px;text-align:center;top:293.15px;font-size:14px;line-height:14px;color:#222;font-weight:normal;">10:05</div>
</div>
<div class="a" style="left:1630px;top:88px;width:17px;height:304px;background:#f1f1f1"></div>
<div class="a" style="left:1632px;top:105px;width:13px;height:58px;background:#c1c1c1"></div>
<svg class="a" style="left:1630px;top:92px" width="17" height="10"><path d="M4.5 8L8.5 4L12.5 8z" fill="#a3a3a3"/></svg>
<svg class="a" style="left:1630px;top:378px" width="17" height="10"><path d="M4.5 2L8.5 6L12.5 2z" fill="#505050"/></svg>
<div class="a" style="left:1135px;top:392px;width:495px;height:16px;background:#f1f1f1"></div>
<div class="a" style="left:1152px;top:394px;width:304px;height:12px;background:#c1c1c1"></div>
<div class="a" style="left:1630px;top:392px;width:17px;height:16px;background:#dcdcdc"></div>
<svg class="a" style="left:1135px;top:392px" width="16" height="16"><path d="M10 4L6 8L10 12z" fill="#a3a3a3"/></svg>
<svg class="a" style="left:1614px;top:392px" width="16" height="16"><path d="M6 4L10 8L6 12z" fill="#505050"/></svg>
<div class="a" style="left:1119px;top:490px;width:544px;height:409px;background:#fff;border-radius:4px;box-shadow:0 2px 1px -1px rgba(0,0,0,.2),0 1px 1px 0 rgba(0,0,0,.14),0 1px 3px 0 rgba(0,0,0,.12)"></div>
<div class="a" style="left:1135px;top:506px;width:512px;height:320px;border-radius:4px;box-shadow:0 2px 1px -1px rgba(0,0,0,.2),0 1px 1px 0 rgba(0,0,0,.14),0 1px 3px 0 rgba(0,0,0,.12)"></div>
<div class="a" style="left:1135px;top:506px;width:495px;height:304px;overflow:hidden;background:#fff;border-top-left-radius:4px">
<div class="a" style="left:0px;top:0px;width:760px;height:26px;background:#283593"></div>
<div class="a" style="left:0px;top:26px;width:760px;height:1px;background:#e0e0e0"></div>
<div class="a" style="left:0px;top:27px;width:760px;height:26px;background:#283593"></div>
<div class="t" style="left:275.00px;width:200px;text-align:center;top:6.15px;font-size:14px;line-height:14px;color:#fff;font-weight:normal;">Empaque</div>
<div class="t" style="left:9.00px;width:200px;text-align:center;top:33.15px;font-size:14px;line-height:14px;color:#fff;font-weight:normal;">Lote</div>
<div class="t" style="left:108.00px;width:200px;text-align:center;top:33.15px;font-size:14px;line-height:14px;color:#fff;font-weight:normal;">Equipo</div>
<div class="t" style="left:217.00px;width:200px;text-align:center;top:33.15px;font-size:14px;line-height:14px;color:#fff;font-weight:normal;">SKU</div>
<div class="t" style="left:303.00px;width:200px;text-align:center;top:33.15px;font-size:14px;line-height:14px;color:#fff;font-weight:normal;">NOk</div>
<div class="t" style="left:373.00px;width:200px;text-align:center;top:33.15px;font-size:14px;line-height:14px;color:#fff;font-weight:normal;">Hora I</div>
<div class="a" style="left:0px;top:86px;width:760px;height:1px;background:#e0e0e0"></div>
<svg class="a" style="left:22px;top:61px;" width="18" height="18" viewBox="0 0 24 24"><path fill="#44847a" d="M3 17.25V21h3.75L17.81 9.94l-3.75-3.75L3 17.25zM20.71 7.04c.39-.39.39-1.02 0-1.41l-2.34-2.34c-.39-.39-1.02-.39-1.41 0l-1.83 1.83 3.75 3.75 1.83-1.83z"/></svg>
<div class="t" style="left:9.00px;width:200px;text-align:center;top:62.15px;font-size:14px;line-height:14px;color:#222;font-weight:normal;">113601</div>
<div class="t" style="left:108.00px;width:200px;text-align:center;top:62.15px;font-size:14px;line-height:14px;color:#222;font-weight:normal;">Empaque 1</div>
<div class="t" style="left:217.00px;width:200px;text-align:center;top:62.15px;font-size:14px;line-height:14px;color:#222;font-weight:normal;">HT000589</div>
<div class="t" style="left:303.00px;width:200px;text-align:center;top:62.15px;font-size:14px;line-height:14px;color:#222;font-weight:normal;">1</div>
<div class="t" style="left:373.00px;width:200px;text-align:center;top:62.15px;font-size:14px;line-height:14px;color:#222;font-weight:normal;">06:00</div>
<div class="a" style="left:0px;top:119px;width:760px;height:1px;background:#e0e0e0"></div>
<svg class="a" style="left:22px;top:94px;" width="18" height="18" viewBox="0 0 24 24"><path fill="#44847a" d="M3 17.25V21h3.75L17.81 9.94l-3.75-3.75L3 17.25zM20.71 7.04c.39-.39.39-1.02 0-1.41l-2.34-2.34c-.39-.39-1.02-.39-1.41 0l-1.83 1.83 3.75 3.75 1.83-1.83z"/></svg>
<div class="t" style="left:9.00px;width:200px;text-align:center;top:95.15px;font-size:14px;line-height:14px;color:#222;font-weight:normal;">113602</div>
<div class="t" style="left:108.00px;width:200px;text-align:center;top:95.15px;font-size:14px;line-height:14px;color:#222;font-weight:normal;">Empaque 2</div>
<div class="t" style="left:217.00px;width:200px;text-align:center;top:95.15px;font-size:14px;line-height:14px;color:#222;font-weight:normal;">R2372</div>
<div class="t" style="left:303.00px;width:200px;text-align:center;top:95.15px;font-size:14px;line-height:14px;color:#222;font-weight:normal;">51</div>
<div class="t" style="left:373.00px;width:200px;text-align:center;top:95.15px;font-size:14px;line-height:14px;color:#222;font-weight:normal;">06:00</div>
<div class="a" style="left:0px;top:152px;width:760px;height:1px;background:#e0e0e0"></div>
<svg class="a" style="left:22px;top:127px;" width="18" height="18" viewBox="0 0 24 24"><path fill="#44847a" d="M3 17.25V21h3.75L17.81 9.94l-3.75-3.75L3 17.25zM20.71 7.04c.39-.39.39-1.02 0-1.41l-2.34-2.34c-.39-.39-1.02-.39-1.41 0l-1.83 1.83 3.75 3.75 1.83-1.83z"/></svg>
<div class="t" style="left:9.00px;width:200px;text-align:center;top:128.15px;font-size:14px;line-height:14px;color:#222;font-weight:normal;">113603</div>
<div class="t" style="left:108.00px;width:200px;text-align:center;top:128.15px;font-size:14px;line-height:14px;color:#222;font-weight:normal;">Empaque 1</div>
<div class="t" style="left:217.00px;width:200px;text-align:center;top:128.15px;font-size:14px;line-height:14px;color:#222;font-weight:normal;">R2372</div>
<div class="t" style="left:303.00px;width:200px;text-align:center;top:128.15px;font-size:14px;line-height:14px;color:#222;font-weight:normal;">1</div>
<div class="t" style="left:373.00px;width:200px;text-align:center;top:128.15px;font-size:14px;line-height:14px;color:#222;font-weight:normal;">07:00</div>
<div class="a" style="left:0px;top:185px;width:760px;height:1px;background:#e0e0e0"></div>
<svg class="a" style="left:22px;top:160px;" width="18" height="18" viewBox="0 0 24 24"><path fill="#44847a" d="M3 17.25V21h3.75L17.81 9.94l-3.75-3.75L3 17.25zM20.71 7.04c.39-.39.39-1.02 0-1.41l-2.34-2.34c-.39-.39-1.02-.39-1.41 0l-1.83 1.83 3.75 3.75 1.83-1.83z"/></svg>
<div class="t" style="left:9.00px;width:200px;text-align:center;top:161.15px;font-size:14px;line-height:14px;color:#222;font-weight:normal;">113604</div>
<div class="t" style="left:108.00px;width:200px;text-align:center;top:161.15px;font-size:14px;line-height:14px;color:#222;font-weight:normal;">Empaque 2</div>
<div class="t" style="left:217.00px;width:200px;text-align:center;top:161.15px;font-size:14px;line-height:14px;color:#222;font-weight:normal;">HT000589</div>
<div class="t" style="left:303.00px;width:200px;text-align:center;top:161.15px;font-size:14px;line-height:14px;color:#222;font-weight:normal;">1</div>
<div class="t" style="left:373.00px;width:200px;text-align:center;top:161.15px;font-size:14px;line-height:14px;color:#222;font-weight:normal;">08:01</div>
<div class="a" style="left:0px;top:218px;width:760px;height:1px;background:#e0e0e0"></div>
<svg class="a" style="left:22px;top:193px;" width="18" height="18" viewBox="0 0 24 24"><path fill="#44847a" d="M3 17.25V21h3.75L17.81 9.94l-3.75-3.75L3 17.25zM20.71 7.04c.39-.39.39-1.02 0-1.41l-2.34-2.34c-.39-.39-1.02-.39-1.41 0l-1.83 1.83 3.75 3.75 1.83-1.83z"/></svg>
<div class="t" style="left:9.00px;width:200px;text-align:center;top:194.15px;font-size:14px;line-height:14px;color:#222;font-weight:normal;">113605</div>
<div class="t" style="left:108.00px;width:200px;text-align:center;top:194.15px;font-size:14px;line-height:14px;color:#222;font-weight:normal;">Empaque 1</div>
<div class="t" style="left:217.00px;width:200px;text-align:center;top:194.15px;font-size:14px;line-height:14px;color:#222;font-weight:normal;">R1764</div>
<div class="t" style="left:303.00px;width:200px;text-align:center;top:194.15px;font-size:14px;line-height:14px;color:#222;font-weight:normal;">15</div>
<div class="t" style="left:373.00px;width:200px;text-align:center;top:194.15px;font-size:14px;line-height:14px;color:#222;font-weight:normal;">10:00</div>
<div class="a" style="left:0px;top:251px;width:760px;height:1px;background:#e0e0e0"></div>
<svg class="a" style="left:22px;top:226px;" width="18" height="18" viewBox="0 0 24 24"><path fill="#44847a" d="M3 17.25V21h3.75L17.81 9.94l-3.75-3.75L3 17.25zM20.71 7.04c.39-.39.39-1.02 0-1.41l-2.34-2.34c-.39-.39-1.02-.39-1.41 0l-1.83 1.83 3.75 3.75 1.83-1.83z"/></svg>
<div class="t" style="left:9.00px;width:200px;text-align:center;top:227.15px;font-size:14px;line-height:14px;color:#222;font-weight:normal;">113606</div>
<div class="t" style="left:108.00px;width:200px;text-align:center;top:227.15px;font-size:14px;line-height:14px;color:#222;font-weight:normal;">Empaque 2</div>
<div class="t" style="left:217.00px;width:200px;text-align:center;top:227.15px;font-size:14px;line-height:14px;color:#222;font-weight:normal;">HT000589</div>
<div class="t" style="left:303.00px;width:200px;text-align:center;top:227.15px;font-size:14px;line-height:14px;color:#222;font-weight:normal;">0</div>
<div class="t" style="left:373.00px;width:200px;text-align:center;top:227.15px;font-size:14px;line-height:14px;color:#222;font-weight:normal;">10:00</div>
<div class="a" style="left:0px;top:284px;width:760px;height:1px;background:#e0e0e0"></div>
<svg class="a" style="left:22px;top:259px;" width="18" height="18" viewBox="0 0 24 24"><path fill="#44847a" d="M3 17.25V21h3.75L17.81 9.94l-3.75-3.75L3 17.25zM20.71 7.04c.39-.39.39-1.02 0-1.41l-2.34-2.34c-.39-.39-1.02-.39-1.41 0l-1.83 1.83 3.75 3.75 1.83-1.83z"/></svg>
<div class="t" style="left:9.00px;width:200px;text-align:center;top:260.15px;font-size:14px;line-height:14px;color:#222;font-weight:normal;">113645</div>
<div class="t" style="left:108.00px;width:200px;text-align:center;top:260.15px;font-size:14px;line-height:14px;color:#222;font-weight:normal;">Empaque 1</div>
<div class="t" style="left:217.00px;width:200px;text-align:center;top:260.15px;font-size:14px;line-height:14px;color:#222;font-weight:normal;">HT000589</div>
<div class="t" style="left:303.00px;width:200px;text-align:center;top:260.15px;font-size:14px;line-height:14px;color:#222;font-weight:normal;">1</div>
<div class="t" style="left:373.00px;width:200px;text-align:center;top:260.15px;font-size:14px;line-height:14px;color:#222;font-weight:normal;">12:00</div>
<div class="a" style="left:0px;top:317px;width:760px;height:1px;background:#e0e0e0"></div>
<svg class="a" style="left:22px;top:292px;" width="18" height="18" viewBox="0 0 24 24"><path fill="#44847a" d="M3 17.25V21h3.75L17.81 9.94l-3.75-3.75L3 17.25zM20.71 7.04c.39-.39.39-1.02 0-1.41l-2.34-2.34c-.39-.39-1.02-.39-1.41 0l-1.83 1.83 3.75 3.75 1.83-1.83z"/></svg>
<div class="t" style="left:9.00px;width:200px;text-align:center;top:293.15px;font-size:14px;line-height:14px;color:#222;font-weight:normal;">113663</div>
<div class="t" style="left:108.00px;width:200px;text-align:center;top:293.15px;font-size:14px;line-height:14px;color:#222;font-weight:normal;">Empaque 2</div>
<div class="t" style="left:217.00px;width:200px;text-align:center;top:293.15px;font-size:14px;line-height:14px;color:#222;font-weight:normal;">HT000589</div>
<div class="t" style="left:303.00px;width:200px;text-align:center;top:293.15px;font-size:14px;line-height:14px;color:#222;font-weight:normal;">1</div>
<div class="t" style="left:373.00px;width:200px;text-align:center;top:293.15px;font-size:14px;line-height:14px;color:#222;font-weight:normal;">13:00</div>
</div>
<div class="a" style="left:1630px;top:506px;width:17px;height:304px;background:#f1f1f1"></div>
<div class="a" style="left:1632px;top:523px;width:13px;height:214px;background:#c1c1c1"></div>
<svg class="a" style="left:1630px;top:510px" width="17" height="10"><path d="M4.5 8L8.5 4L12.5 8z" fill="#a3a3a3"/></svg>
<svg class="a" style="left:1630px;top:796px" width="17" height="10"><path d="M4.5 2L8.5 6L12.5 2z" fill="#505050"/></svg>
<div class="a" style="left:1135px;top:810px;width:495px;height:16px;background:#f1f1f1"></div>
<div class="a" style="left:1152px;top:812px;width:304px;height:12px;background:#c1c1c1"></div>
<div class="a" style="left:1630px;top:810px;width:17px;height:16px;background:#dcdcdc"></div>
<svg class="a" style="left:1135px;top:810px" width="16" height="16"><path d="M10 4L6 8L10 12z" fill="#a3a3a3"/></svg>
<svg class="a" style="left:1614px;top:810px" width="16" height="16"><path d="M6 4L10 8L6 12z" fill="#505050"/></svg>
</div>
<div class="a" style="left:0;top:0;width:1675px;height:913px;background:rgba(0,0,0,.5);z-index:10"></div>
<div class="a" id="modal" style="left:239px;top:163px;width:1200px;height:589px;background:#fff;border-radius:8px;z-index:11;box-shadow:0 11px 15px -7px rgba(0,0,0,.2),0 24px 38px 3px rgba(0,0,0,.14),0 9px 46px 8px rgba(0,0,0,.12)">
<svg class="a" style="left:1163px;top:13px;" width="24" height="24" viewBox="0 0 24 24"><path fill="#6b6b6b" d="M19 6.41L17.59 5 12 10.59 6.41 5 5 6.41 10.59 12 5 17.59 6.41 19 12 13.41 17.59 19 19 17.59 13.41 12z"/></svg>
<div class="t" style="left:400.00px;width:400px;text-align:center;top:44.07px;font-size:20px;line-height:20px;color:#212121;font-weight:normal;letter-spacing:0.1px">Agregar bloque</div>
<div class="t" style="left:400.00px;width:400px;text-align:center;top:69.84px;font-size:12px;line-height:12px;color:#111;font-weight:normal;letter-spacing:0.07px">Ultima fecha registrada: 12/02/2025 08:00</div>
<div class="a" style="left:32px;top:104px;width:160px;height:40px;box-sizing:border-box;border:1px solid #c9cbd6;border-radius:4px"></div>
<div class="a" style="left:41px;top:101px;width:63px;height:6px;background:#fff"></div>
<div class="t" style="left:46px;top:97.84px;font-size:12px;line-height:12px;color:#9a9a9a;font-weight:normal;">Empaque</div>
<div class="t" style="left:46px;top:116.46px;font-size:16px;line-height:16px;color:#a6a6a6;font-weight:normal;">Empaque 1</div>
<svg class="a" style="left:159px;top:112px;" width="24" height="24" viewBox="0 0 24 24"><path fill="#9ea3b5" d="M7 10l5 5 5-5z"/></svg>
<div class="a" style="left:221px;top:104px;width:160px;height:40px;box-sizing:border-box;border:1px solid #c4c6d0;border-radius:4px"></div>
<div class="a" style="left:230px;top:101px;width:80px;height:6px;background:#fff"></div>
<div class="t" style="left:235px;top:97.84px;font-size:12px;line-height:12px;color:#666;font-weight:normal;">Fecha Inicio</div>
<div class="t" style="left:237px;top:116.46px;font-size:16px;line-height:16px;color:#1a1a1a;font-weight:normal;letter-spacing:0.4px">12/02/2025</div>
<svg class="a" style="left:350.5px;top:117px" width="13" height="14" viewBox="0 0 13 14"><path d="M0.7 2.6h11.6v10.7H0.7z" fill="none" stroke="#111" stroke-width="1.4"/><path d="M0.7 2.6h11.6v2.6H0.7z" fill="#111"/><path d="M3.2 0.6v3M9.8 0.6v3" stroke="#111" stroke-width="1.3"/></svg>
<div class="a" style="left:411px;top:104px;width:160px;height:40px;box-sizing:border-box;border:1px solid #c4c6d0;border-radius:4px"></div>
<div class="a" style="left:420px;top:101px;width:73px;height:6px;background:#fff"></div>
<div class="t" style="left:425px;top:97.84px;font-size:12px;line-height:12px;color:#666;font-weight:normal;">Hora Inicio</div>
<div class="t" style="left:420px;top:116.46px;font-size:16px;line-height:16px;color:#1a1a1a;font-weight:normal;">10 AM</div>
<svg class="a" style="left:537px;top:112px;" width="24" height="24" viewBox="0 0 24 24"><path fill="#666" d="M11.99 2C6.47 2 2 6.48 2 12s4.47 10 9.99 10C17.52 22 22 17.52 22 12S17.52 2 11.99 2zM12 20c-4.42 0-8-3.58-8-8s3.58-8 8-8 8 3.58 8 8-3.58 8-8 8zm.5-13H11v6l5.25 3.15.75-1.23-4.5-2.67z"/></svg>
<div class="a" style="left:600px;top:104px;width:160px;height:40px;box-sizing:border-box;border:1px solid #c4c6d0;border-radius:4px"></div>
<div class="a" style="left:609px;top:101px;width:65px;height:6px;background:#fff"></div>
<div class="t" style="left:614px;top:97.84px;font-size:12px;line-height:12px;color:#666;font-weight:normal;">Fecha Fin</div>
<div class="t" style="left:616px;top:116.46px;font-size:16px;line-height:16px;color:#1a1a1a;font-weight:normal;letter-spacing:0.4px">12/02/2025</div>
<svg class="a" style="left:729.5px;top:117px" width="13" height="14" viewBox="0 0 13 14"><path d="M0.7 2.6h11.6v10.7H0.7z" fill="none" stroke="#111" stroke-width="1.4"/><path d="M0.7 2.6h11.6v2.6H0.7z" fill="#111"/><path d="M3.2 0.6v3M9.8 0.6v3" stroke="#111" stroke-width="1.3"/></svg>
<div class="a" style="left:789px;top:104px;width:160px;height:40px;box-sizing:border-box;border:1px solid #c4c6d0;border-radius:4px"></div>
<div class="a" style="left:798px;top:101px;width:60px;height:6px;background:#fff"></div>
<div class="t" style="left:803px;top:97.84px;font-size:12px;line-height:12px;color:#666;font-weight:normal;">Hora Fin</div>
<div class="t" style="left:798px;top:116.46px;font-size:16px;line-height:16px;color:#1a1a1a;font-weight:normal;">11 AM</div>
<svg class="a" style="left:915px;top:112px;" width="24" height="24" viewBox="0 0 24 24"><path fill="#666" d="M11.99 2C6.47 2 2 6.48 2 12s4.47 10 9.99 10C17.52 22 22 17.52 22 12S17.52 2 11.99 2zM12 20c-4.42 0-8-3.58-8-8s3.58-8 8-8 8 3.58 8 8-3.58 8-8 8zm.5-13H11v6l5.25 3.15.75-1.23-4.5-2.67z"/></svg>
<div class="a" style="left:979px;top:104px;width:160px;height:40px;box-sizing:border-box;border:2px solid #283593;border-radius:4px"></div>
<div class="a" style="left:988px;top:101px;width:46px;height:6px;background:#fff"></div>
<div class="t" style="left:993px;top:97.84px;font-size:12px;line-height:12px;color:#283593;font-weight:normal;">Paros</div>
<div class="t" style="left:993px;top:116.46px;font-size:16px;line-height:16px;color:#1a1a1a;font-weight:normal;">Tiempo de br…</div>
<svg class="a" style="left:1108px;top:112px;" width="24" height="24" viewBox="0 0 24 24"><path fill="#555" d="M7 10l5 5 5-5z"/></svg>
<div class="t" style="left:273px;top:178.46px;font-size:16px;line-height:16px;color:#222;font-weight:normal;">Teclado</div>
<div class="a" style="left:341px;top:179px;width:34px;height:14px;border-radius:7px;background:#9e9e9e"></div>
<div class="a" style="left:338px;top:176px;width:20px;height:20px;border-radius:50%;background:#fff;box-shadow:0 2px 1px -1px rgba(0,0,0,.2),0 1px 1px 0 rgba(0,0,0,.14),0 1px 3px 0 rgba(0,0,0,.12)"></div>
<div class="t" style="left:473px;top:178.46px;font-size:16px;line-height:16px;color:#222;font-weight:normal;">Paro</div>
<div class="a" style="left:519px;top:179px;width:34px;height:14px;border-radius:7px;background:#e8a09f"></div>
<div class="a" style="left:536px;top:176px;width:20px;height:20px;border-radius:50%;background:#d32f2f;box-shadow:0 2px 1px -1px rgba(0,0,0,.2),0 1px 1px 0 rgba(0,0,0,.14),0 1px 3px 0 rgba(0,0,0,.12)"></div>
<div class="a" style="left:600px;top:167px;width:112px;height:31px;background:#283593;border-radius:4px;box-shadow:0 3px 1px -2px rgba(0,0,0,.2),0 2px 2px 0 rgba(0,0,0,.14),0 1px 5px 0 rgba(0,0,0,.12)"></div>
<svg class="a" style="left:607px;top:173px;" width="20" height="20" viewBox="0 0 24 24"><path fill="#fff" d="M19 13h-6v6h-2v-6H5v-2h6V5h2v6h6v2z"/></svg>
<div class="t" style="left:634px;top:175.00px;font-size:13px;line-height:13px;color:#fff;font-weight:normal;letter-spacing:0.37px;-webkit-text-stroke:0.35px #fff">AGREGAR</div>
<div class="a" style="left:32px;top:205px;width:1136px;height:275px;border-radius:4px;background:#fff;box-shadow:0 2px 1px -1px rgba(0,0,0,.2),0 1px 1px 0 rgba(0,0,0,.14),0 1px 3px 0 rgba(0,0,0,.12)"></div>
<div class="a" style="left:32px;top:205px;width:1136px;height:26px;background:#283593;border-radius:4px 4px 0 0;box-shadow:0 1px 2px rgba(40,53,147,.3)"></div>
<div class="t" style="left:-43.00px;width:300px;text-align:center;top:211.15px;font-size:14px;line-height:14px;color:#fff;font-weight:normal;-webkit-text-stroke:0.25px #fff">SKU / Paro</div>
<div class="t" style="left:137.00px;width:300px;text-align:center;top:211.15px;font-size:14px;line-height:14px;color:#fff;font-weight:normal;-webkit-text-stroke:0.25px #fff">Fecha Inicio</div>
<div class="t" style="left:348.00px;width:300px;text-align:center;top:211.15px;font-size:14px;line-height:14px;color:#fff;font-weight:normal;-webkit-text-stroke:0.25px #fff">Fecha Fin</div>
<div class="t" style="left:518.00px;width:300px;text-align:center;top:211.15px;font-size:14px;line-height:14px;color:#fff;font-weight:normal;-webkit-text-stroke:0.25px #fff">Cantidad</div>
<div class="t" style="left:689.00px;width:300px;text-align:center;top:211.15px;font-size:14px;line-height:14px;color:#fff;font-weight:normal;-webkit-text-stroke:0.25px #fff">Cantidad defectos</div>
<div class="t" style="left:842.00px;width:300px;text-align:center;top:211.15px;font-size:14px;line-height:14px;color:#fff;font-weight:normal;-webkit-text-stroke:0.25px #fff">Paro</div>
<div class="t" style="left:952.00px;width:300px;text-align:center;top:211.15px;font-size:14px;line-height:14px;color:#fff;font-weight:normal;-webkit-text-stroke:0.25px #fff">Acciones</div>
<div class="a" style="left:32px;top:268px;width:1136px;height:1px;background:#e6e6e6"></div>
<div class="a" style="left:32px;top:305px;width:1136px;height:1px;background:#fff"></div>
<div class="t" style="left:48px;top:243.15px;font-size:14px;line-height:14px;color:#222;font-weight:normal;">R2372</div>
<div class="t" style="left:137.00px;width:300px;text-align:center;top:243.15px;font-size:14px;line-height:14px;color:#222;font-weight:normal;">12-02-2025 06:00</div>
<div class="t" style="left:348.00px;width:300px;text-align:center;top:243.15px;font-size:14px;line-height:14px;color:#222;font-weight:normal;">12-02-2025 08:00</div>
<div class="t" style="left:518.00px;width:300px;text-align:center;top:243.15px;font-size:14px;line-height:14px;color:#222;font-weight:normal;">500</div>
<div class="t" style="left:689.00px;width:300px;text-align:center;top:243.15px;font-size:14px;line-height:14px;color:#222;font-weight:normal;">0</div>
<svg class="a" style="left:1091px;top:238px;" width="24" height="24" viewBox="0 0 24 24"><path fill="#757575" d="M6 19c0 1.1.9 2 2 2h8c1.1 0 2-.9 2-2V7H6v12zM19 4h-3.5l-1-1h-5l-1 1H5v2h14V4z"/></svg>
<div class="t" style="left:48px;top:280.15px;font-size:14px;line-height:14px;color:#222;font-weight:normal;">R2136</div>
<div class="t" style="left:137.00px;width:300px;text-align:center;top:280.15px;font-size:14px;line-height:14px;color:#222;font-weight:normal;">12-02-2025 08:00</div>
<div class="t" style="left:348.00px;width:300px;text-align:center;top:280.15px;font-size:14px;line-height:14px;color:#222;font-weight:normal;">12-02-2025 10:00</div>
<div class="t" style="left:518.00px;width:300px;text-align:center;top:280.15px;font-size:14px;line-height:14px;color:#222;font-weight:normal;">1000</div>
<div class="t" style="left:689.00px;width:300px;text-align:center;top:280.15px;font-size:14px;line-height:14px;color:#222;font-weight:normal;">0</div>
<svg class="a" style="left:1091px;top:275px;" width="24" height="24" viewBox="0 0 24 24"><path fill="#757575" d="M6 19c0 1.1.9 2 2 2h8c1.1 0 2-.9 2-2V7H6v12zM19 4h-3.5l-1-1h-5l-1 1H5v2h14V4z"/></svg>
<div class="a" style="left:548px;top:520px;width:104px;height:37px;background:#283593;border-radius:4px;box-shadow:0 3px 1px -2px rgba(0,0,0,.2),0 2px 2px 0 rgba(0,0,0,.14),0 1px 5px 0 rgba(0,0,0,.12)"></div>
<div class="t" style="left:500.00px;width:200px;text-align:center;top:531.15px;font-size:14px;line-height:14px;color:#fff;font-weight:normal;letter-spacing:0.4px;-webkit-text-stroke:0.2px #fff">GUARDAR</div>
</div>
</body></html>
